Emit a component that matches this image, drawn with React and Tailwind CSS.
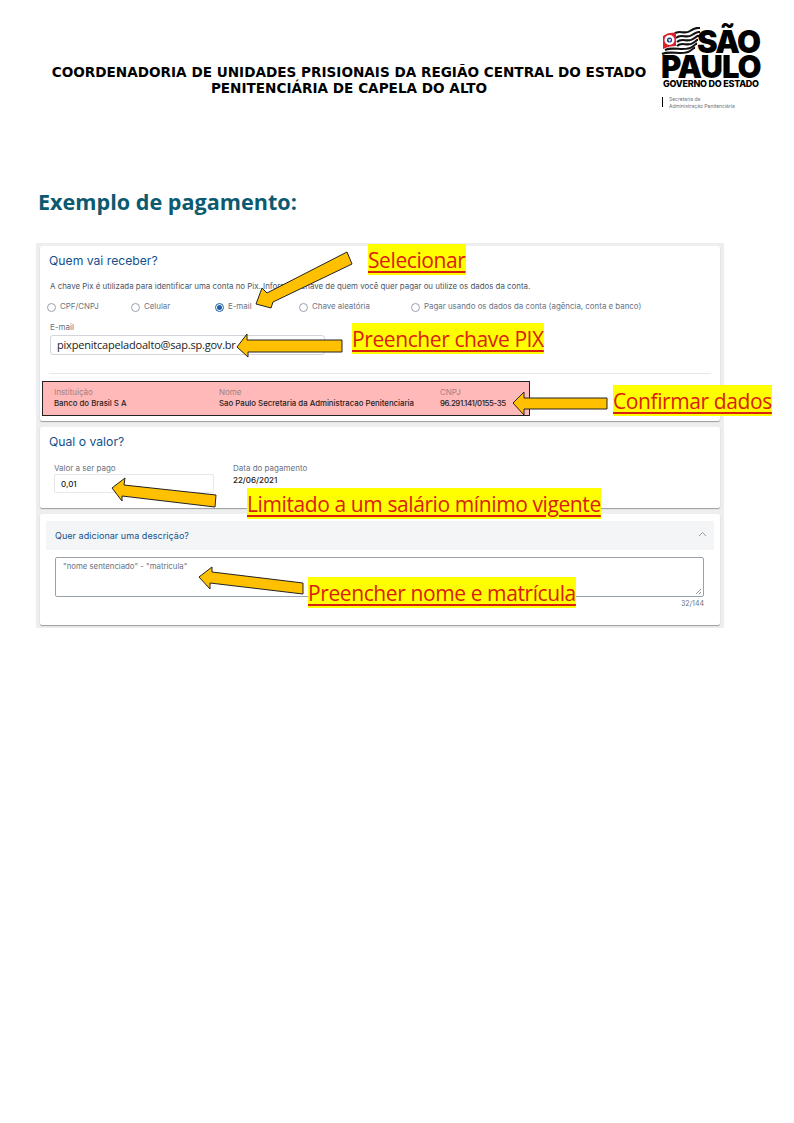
const openSans = { fontFamily: '"Open Sans", "Noto Sans", sans-serif' };

const stripes = [
  "M13 7 C18 2 23 8 29 4 S36 1 39 1",
  "M15 11 C20 6 25 12 31 8 S37 5 39 5",
  "M16 15 C21 10 26 16 32 12 S36 9 38 9",
  "M16 19 C21 14 26 20 32 16 S35 13 37 13",
  "M4 23 C12 19 24 25 31 20 S34 17 36 17",
  "M1 27 C10 23 22 29 29 24 S32 21 34 21",
];

function Logo() {
  return (
    <div className="relative w-[104px] h-[84px] shrink-0 text-black font-['Inter',sans-serif]">
      <svg className="absolute left-0 top-0" width="44" height="32" viewBox="0 0 44 32" fill="none">
        {stripes.map((d) => (
          <path key={d} d={d} stroke="#111" strokeWidth="2.1" />
        ))}
        <path d="M2 9 C6 6 10 5 15 6 L15 19 C10 19 6 20 2 22 Z" fill="#d9202c" />
        <circle cx="8.5" cy="13" r="5" fill="#fff" />
        <circle cx="8.5" cy="13" r="2.6" fill="#1d3f8f" />
        <path d="M7 12.5 L10 12 L9 15 Z" fill="#fff" />
      </svg>
      <div className="absolute left-[36px] top-[2px] text-[31px] leading-[25px] font-black tracking-[-1.5px]">SÃO</div>
      <div className="absolute left-0 top-[27px] text-[31px] leading-[25px] font-black tracking-[-1px]">PAULO</div>
      <div className="absolute left-[2px] top-[52px] text-[9px] leading-[10px] font-extrabold tracking-[-0.25px] whitespace-nowrap">GOVERNO DO ESTADO</div>
      <div className="absolute left-[1px] top-[70px] w-px h-[10px] bg-black" />
      <div className="absolute left-[8px] top-[69px] text-[5px] leading-[7px] text-gray-500 whitespace-nowrap">
        Secretaria da<br />Administração Penitenciária
      </div>
    </div>
  );
}

function Radio({ label, checked, className }) {
  return (
    <div className={`flex items-center gap-[4px] ${className}`}>
      <span className={`w-[9px] h-[9px] rounded-full border flex items-center justify-center ${checked ? "border-[#1c5fa8]" : "border-gray-400"}`}>
        {checked && <span className="w-[5px] h-[5px] rounded-full bg-[#1c5fa8]" />}
      </span>
      <span className="text-[7.9px] text-gray-500 whitespace-nowrap">{label}</span>
    </div>
  );
}

function Field({ label, value, className, valueClassName }) {
  return (
    <div className={className}>
      <div className="text-[8px] leading-[11px] text-[#a08080]">{label}</div>
      <div className={`text-[7.8px] leading-[11px] text-[#222] font-medium whitespace-nowrap ${valueClassName}`}>{value}</div>
    </div>
  );
}

function Note({ children, className }) {
  return (
    <div
      className={`absolute bg-[#ffff00] text-[#d92010] underline decoration-[1.5px] underline-offset-[3px] text-[21px] leading-[33px] tracking-[-0.4px] h-[31px] whitespace-nowrap ${className}`}
      style={openSans}
    >
      {children}
    </div>
  );
}

const arrows = [
  "256,304 262,288 267,293 347,252 352,264 273,302 271,308",
  "237,347 247,334 247,340 342,340 342,352 248,352 248,357",
  "513,403 524,392 524,398 607,398 607,409 524,409 524,415",
  "112,488 125,478 124,485 216,495 215,507 122,496 122,501",
  "199,577 212,567 212,572 303,583 303,594 210,583 210,589",
];

export default function App() {
  return (
    <div className="relative w-[794px] h-[1123px] bg-white overflow-hidden font-['Inter',sans-serif]">
      {/* Header */}
      <div className="flex items-start pl-[50px] pt-[27px]">
        <div className="w-[611px] pr-[13px] pt-[37px] text-center text-[13.6px] leading-[16px] font-bold text-black font-['DejaVu_Sans',sans-serif] whitespace-nowrap">
          COORDENADORIA DE UNIDADES PRISIONAIS DA REGIÃO CENTRAL DO ESTADO
          <br />
          PENITENCIÁRIA DE CAPELA DO ALTO
        </div>
        <Logo />
      </div>

      <h1 className="ml-[38px] mt-[76px] text-[21.6px] leading-[30px] font-bold text-[#0b5a70]" style={openSans}>
        Exemplo de pagamento:
      </h1>

      {/* Print do sistema */}
      <div className="ml-[36px] mt-[26px] w-[688px] h-[385px] bg-[#eceef0] px-[4px] pt-[3px] flex flex-col gap-[6px]">
        <div className="h-[175px] bg-white rounded-[2px] shadow-[0_1px_1px_rgba(0,0,0,0.35)] pt-[7px]">
          <div className="pl-[9px] text-[12.2px] leading-[16px] text-[#11508c]">Quem vai receber?</div>
          <div className="pl-[10px] mt-[11px] text-[7.9px] leading-[12px] text-gray-600">
            A chave Pix é utilizada para identificar uma conta no Pix. Informe a chave de quem você quer pagar ou utilize os dados da conta.
          </div>
          <div className="flex pl-[7px] mt-[9px] h-[12px]">
            <Radio label="CPF/CNPJ" className="w-[84px]" />
            <Radio label="Celular" className="w-[84px]" />
            <Radio label="E-mail" checked className="w-[84px]" />
            <Radio label="Chave aleatória" className="w-[112px]" />
            <Radio label="Pagar usando os dados da conta (agência, conta e banco)" />
          </div>
          <div className="pl-[10px] mt-[9px] text-[8px] leading-[10px] text-gray-500">E-mail</div>
          <div className="ml-[10px] mt-[3px] w-[275px] h-[20px] border border-gray-300 rounded-[3px] pl-[6px] text-[11px] tracking-[-0.2px] leading-[18px] text-[#222]" style={openSans}>
            pixpenitcapeladoalto@sap.sp.gov.br
          </div>
          <div className="mx-[9px] mt-[18px] h-px bg-gray-200" />
          <div className="ml-[2px] mt-[7px] w-[488px] h-[35px] bg-[#ffb9b9] border border-[#222] pl-[11px] pt-[5px] flex">
            <Field label="Instituição" value="Banco do Brasil S A" className="w-[165px]" />
            <Field label="Nome" value="Sao Paulo Secretaria da Administracao Penitenciaria" className="w-[221px]" />
            <Field label="CNPJ" value="96.291.141/0155-35" valueClassName="tracking-[-0.35px]" />
          </div>
        </div>

        <div className="h-[81px] bg-white rounded-[2px] shadow-[0_1px_1px_rgba(0,0,0,0.35)] pt-[7px]">
          <div className="pl-[9px] text-[12.2px] leading-[16px] text-[#11508c]">Qual o valor?</div>
          <div className="flex pl-[14px] mt-[13px]">
            <div className="w-[179px]">
              <div className="text-[8px] leading-[11px] text-gray-500">Valor a ser pago</div>
              <div className="w-[160px] h-[19px] border border-gray-200 rounded-[2px] pl-[6px] text-[8px] leading-[18px] text-[#222] font-medium">0,01</div>
            </div>
            <div>
              <div className="text-[8px] leading-[11px] text-gray-500">Data do pagamento</div>
              <div className="text-[8px] leading-[12px] text-[#222] font-medium">22/06/2021</div>
            </div>
          </div>
        </div>

        <div className="h-[111px] bg-white rounded-[2px] shadow-[0_1px_1px_rgba(0,0,0,0.35)] pt-[7px] px-[6px]">
          <div className="h-[29px] bg-[#f4f5f7] flex items-center justify-between pl-[9px] pr-[7px]">
            <span className="text-[9px] tracking-[0.05px] text-[#11508c]">Quer adicionar uma descrição?</span>
            <svg width="9" height="6" viewBox="0 0 9 6" fill="none" className="mb-[3px]">
              <path d="M1 5 L4.5 1.5 L8 5" stroke="#888" strokeWidth="0.8" />
            </svg>
          </div>
          <div className="relative ml-[9px] mt-[7px] w-[649px] h-[40px] border border-gray-400 rounded-[2px] pl-[7px] pt-[2px] text-[7.8px] leading-[12px] text-gray-500">
            "nome sentenciado" - "matricula"
            <svg width="7" height="7" viewBox="0 0 7 7" className="absolute right-[1px] bottom-[1px]" fill="none">
              <path d="M1 6 L6 1 M4 6 L6 4" stroke="#666" strokeWidth="0.7" />
            </svg>
          </div>
          <div className="w-[658px] text-right text-[7px] leading-[11px] text-gray-500 mt-[1px]">32/144</div>
        </div>
      </div>

      {/* Anotações */}
      <svg className="absolute inset-0 pointer-events-none" width="794" height="1123" viewBox="0 0 794 1123">
        {arrows.map((points) => (
          <polygon key={points} points={points} fill="#ffc000" stroke="#222" strokeWidth="1" />
        ))}
      </svg>
      <Note className="left-[368px] top-[244px]">Selecionar</Note>
      <Note className="left-[352px] top-[323px]">Preencher chave PIX</Note>
      <Note className="left-[613px] top-[385px]">Confirmar dados</Note>
      <Note className="left-[247px] top-[488px]">Limitado a um salário mínimo vigente</Note>
      <Note className="left-[308px] top-[577px]">Preencher nome e matrícula</Note>
    </div>
  );
}
